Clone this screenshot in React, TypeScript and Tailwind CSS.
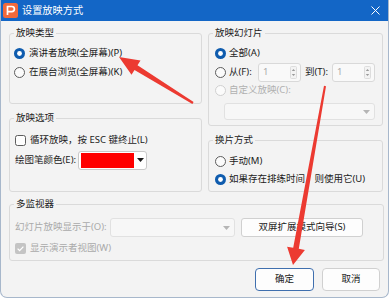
import type { ReactNode } from 'react';

function Radio({ checked = false, disabled = false }: { checked?: boolean; disabled?: boolean }) {
  return (
    <svg width="11" height="11" viewBox="0 0 11 11" className="shrink-0">
      {checked ? (
        <>
          <circle cx="5.5" cy="5.5" r="5.5" fill="#0f5cae" />
          <circle cx="5.5" cy="5.5" r="2.4" fill="#ffffff" />
        </>
      ) : (
        <circle cx="5.5" cy="5.5" r="5" fill="#fbfbfb" stroke={disabled ? '#cfcfcf' : '#5c5c5c'} strokeWidth="1" />
      )}
    </svg>
  );
}

function Checkbox({ checked = false, disabled = false }: { checked?: boolean; disabled?: boolean }) {
  if (disabled && checked) {
    return (
      <svg width="11" height="11" viewBox="0 0 11 11" className="shrink-0">
        <rect x="0" y="0" width="11" height="11" rx="2" fill="#c4c4c4" />
        <path d="M2.6 5.6 L4.6 7.6 L8.4 3.6" fill="none" stroke="#ffffff" strokeWidth="1.3" />
      </svg>
    );
  }
  return (
    <svg width="11" height="11" viewBox="0 0 11 11" className="shrink-0">
      <rect x="0.5" y="0.5" width="10" height="10" rx="2" fill="#fdfdfd" stroke="#5c5c5c" />
    </svg>
  );
}

function Group({ title, className, children }: { title: string; className?: string; children?: ReactNode }) {
  return (
    <div className={`border border-[#dadada] rounded-[3px] flex flex-col ${className ?? ''}`}>
      <div className="-mt-[8px] ml-[4px] w-fit px-[2px] h-[14px] bg-[#f3f3f3] leading-[14px] whitespace-nowrap">{title}</div>
      {children}
    </div>
  );
}

function Spin() {
  return (
    <div className="h-[19px] flex-1 border border-[#d9d9d9] rounded-[3px] bg-[#f9f9f9] flex items-center">
      <span className="flex-1 pl-[4px] text-[#a9a9a9]">1</span>
      <svg width="7" height="13" viewBox="0 0 7 13" className="mr-[3px]">
        <rect x="0.5" y="0.5" width="6" height="12" rx="1" fill="#f3f3f3" stroke="#dddddd" />
        <path d="M1.8 5 L3.5 3 L5.2 5 Z" fill="#9a9a9a" />
        <path d="M1.8 8 L3.5 10 L5.2 8 Z" fill="#9a9a9a" />
      </svg>
    </div>
  );
}

function SmallArrow({ color }: { color: string }) {
  return (
    <svg width="7" height="4" viewBox="0 0 7 4">
      <path d="M0 0 L7 0 L3.5 4 Z" fill={color} />
    </svg>
  );
}

export default function App() {
  return (
    <div className="w-[390px] h-[300px] bg-white relative overflow-hidden font-['Noto_Sans','Noto_Sans_CJK_SC',sans-serif] text-[9.5px] text-[#1b1b1b] whitespace-nowrap">
      <div className="w-[389px] h-[298px] flex flex-col border-x border-b border-[#a7b7cb] rounded-b-[7px] bg-[#f3f3f3] overflow-hidden">
        {/* title bar */}
        <div className="h-[21px] -mx-px bg-[#1366c6] flex items-center pl-[3px] shrink-0">
          <svg width="15" height="15" viewBox="0 0 15 15">
            <rect x="0" y="0" width="15" height="15" rx="2.5" fill="#f2693b" />
            <path d="M4.5 12 V3.5 H8.8 A2.6 2.6 0 0 1 8.8 8.7 H4.5" fill="none" stroke="#ffffff" strokeWidth="1.7" />
          </svg>
          <span className="ml-[4px] text-white text-[10.2px]">设置放映方式</span>
          <svg width="9" height="9" viewBox="0 0 9 9" className="ml-auto mr-[9px]">
            <path d="M0.5 0.5 L8.5 8.5 M8.5 0.5 L0.5 8.5" stroke="#ffffff" strokeWidth="1" />
          </svg>
        </div>

        <div className="flex-1 flex flex-col pl-[8px] pr-[4px] pt-[12px]">
          <div className="flex gap-[6px]">
            {/* left column */}
            <div className="w-[193px] flex flex-col">
              <Group title="放映类型" className="h-[71px]">
                <div className="mt-[4px] h-[19px] flex items-center pl-[4px] gap-[4px]">
                  <Radio checked />
                  <span>演讲者放映(全屏幕)(P)</span>
                </div>
                <div className="h-[19px] flex items-center pl-[4px] gap-[4px]">
                  <Radio />
                  <span>在展台浏览(全屏幕)(K)</span>
                </div>
              </Group>
              <Group title="放映选项" className="h-[74px] mt-[14px]">
                <div className="mt-[6px] h-[18px] flex items-center pl-[5px] gap-[4px]">
                  <Checkbox />
                  <span>循环放映，按 ESC 键终止(L)</span>
                </div>
                <div className="mt-[1px] h-[20px] flex items-center pl-[5px]">
                  <span className="w-[63px]">绘图笔颜色(E):</span>
                  <div className="w-[69px] h-[19px] border border-[#c9c9c9] rounded-[3px] bg-white flex items-center pl-[2px]">
                    <div className="w-[53px] h-[15px] bg-[#ff0000]" />
                    <div className="flex-1 flex justify-center">
                      <SmallArrow color="#1b1b1b" />
                    </div>
                  </div>
                </div>
              </Group>
            </div>

            {/* right column */}
            <div className="w-[175px] flex flex-col">
              <Group title="放映幻灯片" className="h-[93px]">
                <div className="mt-[4px] h-[19px] flex items-center pl-[6px] gap-[3px]">
                  <Radio checked />
                  <span>全部(A)</span>
                </div>
                <div className="h-[19px] flex items-center pl-[6px] pr-[7px]">
                  <Radio />
                  <span className="ml-[3px] w-[29px]">从(F):</span>
                  <Spin />
                  <span className="mx-[4px]">到(T):</span>
                  <Spin />
                </div>
                <div className="h-[17px] flex items-center pl-[6px] gap-[3px] text-[#b0b0b0]">
                  <Radio disabled />
                  <span>自定义放映(C):</span>
                </div>
                <div className="mt-[4px] ml-[15px] mr-[7px] h-[17px] border border-[#e1e1e1] rounded-[3px] bg-[#f7f7f7] flex items-center justify-end pr-[4px]">
                  <SmallArrow color="#b5b5b5" />
                </div>
              </Group>
              <Group title="换片方式" className="h-[52px] mt-[14px]">
                <div className="mt-[5px] h-[18px] flex items-center pl-[6px] gap-[3px]">
                  <Radio />
                  <span>手动(M)</span>
                </div>
                <div className="h-[18px] flex items-center pl-[6px] gap-[3px]">
                  <Radio checked />
                  <span>如果存在排练时间，则使用它(U)</span>
                </div>
              </Group>
            </div>
          </div>

          <Group title="多监视器" className="h-[57px] mt-[12px]">
            <div className="mt-[7px] h-[19px] flex items-center pl-[5px]">
              <span className="w-[95px] text-[#aaaaaa]">幻灯片放映显示于(O):</span>
              <div className="w-[125px] h-[19px] border border-[#e1e1e1] rounded-[3px] bg-[#f7f7f7] flex items-center justify-end pr-[4px]">
                <SmallArrow color="#b5b5b5" />
              </div>
              <div className="ml-[6px] w-[122px] h-[19px] border border-[#d0d0d0] rounded-[3px] bg-[#fdfdfd] flex items-center justify-center">
                双屏扩展模式向导(S)
              </div>
            </div>
            <div className="mt-[2px] h-[18px] flex items-center pl-[5px] gap-[4px] text-[#aaaaaa]">
              <Checkbox checked disabled />
              <span>显示演示者视图(W)</span>
            </div>
          </Group>

          <div className="mt-[7px] flex justify-end gap-[8px] pr-[4px]">
            <div className="w-[59px] h-[23px] border border-[#3f6fae] rounded-[4px] bg-[#fdfdfd] flex items-center justify-center">
              确定
            </div>
            <div className="w-[58px] h-[23px] border border-[#d0d0d0] rounded-[4px] bg-[#fdfdfd] flex items-center justify-center">
              取消
            </div>
          </div>
        </div>
      </div>

      {/* red annotation arrows */}
      <svg className="absolute inset-0 pointer-events-none" width="390" height="300" viewBox="0 0 390 300">
        <polygon
          points="119,57 140.5,60.4 137.5,65.2 193.6,102 192.4,104 134.5,70 131.5,74.8"
          fill="#ec3a31"
        />
        <polygon
          points="293,265 304.9,249.9 298.8,248.8 326,86.2 324,85.8 293.2,247.8 287.1,246.7"
          fill="#ec3a31"
        />
      </svg>
    </div>
  );
}
